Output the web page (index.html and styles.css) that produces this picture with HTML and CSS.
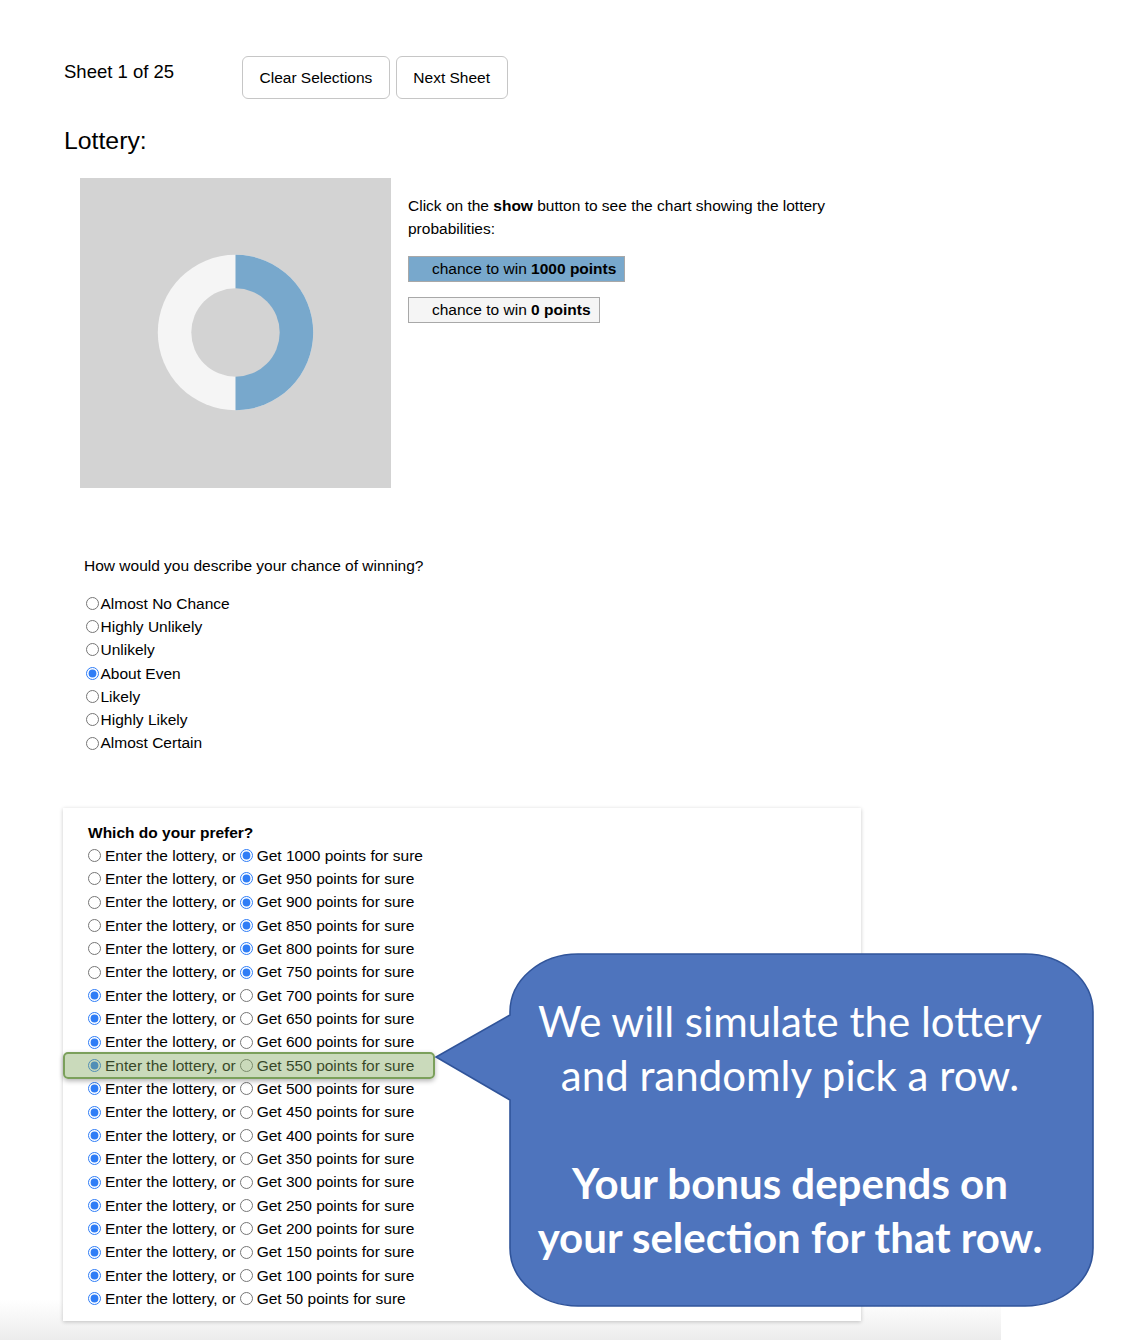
FILE: index.html
```html
<!DOCTYPE html>
<html>
<head>
<meta charset="utf-8">
<title>Lottery</title>
<link rel="stylesheet" href="styles.css">
</head>
<body>
<div class="page">
  <div class="topbar">
    <div class="sheet">Sheet 1 of 25</div>
    <button class="btn">Clear Selections</button>
    <button class="btn">Next Sheet</button>
  </div>
  <h2 class="title">Lottery:</h2>
  <div class="lottery">
    <div class="chart">
      <svg width="311" height="310" viewBox="0 0 311 310">
        <circle cx="155.5" cy="154.5" r="77.7" fill="#f5f5f5"/>
        <path d="M155.5 76.8 A77.7 77.7 0 0 1 155.5 232.2 Z" fill="#78a8cc"/>
        <circle cx="155.5" cy="154.5" r="44.2" fill="#d3d3d3"/>
      </svg>
    </div>
    <div class="info">
      <p class="info-text">Click on the <b>show</b> button to see the chart showing the lottery probabilities:</p>
      <div class="legend legend-blue">chance to win&nbsp;<b>1000 points</b></div>
      <div class="legend legend-light">chance to win&nbsp;<b>0 points</b></div>
    </div>
  </div>
  <div class="question">
    <p class="q-text">How would you describe your chance of winning?</p>
    <label class="opt"><input type="radio" name="q">Almost No Chance</label>
    <label class="opt"><input type="radio" name="q">Highly Unlikely</label>
    <label class="opt"><input type="radio" name="q">Unlikely</label>
    <label class="opt"><input type="radio" name="q" checked>About Even</label>
    <label class="opt"><input type="radio" name="q">Likely</label>
    <label class="opt"><input type="radio" name="q">Highly Likely</label>
    <label class="opt"><input type="radio" name="q">Almost Certain</label>
  </div>
  <div class="card">
    <div class="card-title">Which do your prefer?</div>
    <div class="row"><input type="radio" name="r1" class="ra">Enter the lottery, or<input type="radio" name="r1" class="rb" checked>Get 1000 points for sure</div>
    <div class="row"><input type="radio" name="r2" class="ra">Enter the lottery, or<input type="radio" name="r2" class="rb" checked>Get 950 points for sure</div>
    <div class="row"><input type="radio" name="r3" class="ra">Enter the lottery, or<input type="radio" name="r3" class="rb" checked>Get 900 points for sure</div>
    <div class="row"><input type="radio" name="r4" class="ra">Enter the lottery, or<input type="radio" name="r4" class="rb" checked>Get 850 points for sure</div>
    <div class="row"><input type="radio" name="r5" class="ra">Enter the lottery, or<input type="radio" name="r5" class="rb" checked>Get 800 points for sure</div>
    <div class="row"><input type="radio" name="r6" class="ra">Enter the lottery, or<input type="radio" name="r6" class="rb" checked>Get 750 points for sure</div>
    <div class="row"><input type="radio" name="r7" class="ra" checked>Enter the lottery, or<input type="radio" name="r7" class="rb">Get 700 points for sure</div>
    <div class="row"><input type="radio" name="r8" class="ra" checked>Enter the lottery, or<input type="radio" name="r8" class="rb">Get 650 points for sure</div>
    <div class="row"><input type="radio" name="r9" class="ra" checked>Enter the lottery, or<input type="radio" name="r9" class="rb">Get 600 points for sure</div>
    <div class="row"><input type="radio" name="r10" class="ra" checked>Enter the lottery, or<input type="radio" name="r10" class="rb">Get 550 points for sure</div>
    <div class="row"><input type="radio" name="r11" class="ra" checked>Enter the lottery, or<input type="radio" name="r11" class="rb">Get 500 points for sure</div>
    <div class="row"><input type="radio" name="r12" class="ra" checked>Enter the lottery, or<input type="radio" name="r12" class="rb">Get 450 points for sure</div>
    <div class="row"><input type="radio" name="r13" class="ra" checked>Enter the lottery, or<input type="radio" name="r13" class="rb">Get 400 points for sure</div>
    <div class="row"><input type="radio" name="r14" class="ra" checked>Enter the lottery, or<input type="radio" name="r14" class="rb">Get 350 points for sure</div>
    <div class="row"><input type="radio" name="r15" class="ra" checked>Enter the lottery, or<input type="radio" name="r15" class="rb">Get 300 points for sure</div>
    <div class="row"><input type="radio" name="r16" class="ra" checked>Enter the lottery, or<input type="radio" name="r16" class="rb">Get 250 points for sure</div>
    <div class="row"><input type="radio" name="r17" class="ra" checked>Enter the lottery, or<input type="radio" name="r17" class="rb">Get 200 points for sure</div>
    <div class="row"><input type="radio" name="r18" class="ra" checked>Enter the lottery, or<input type="radio" name="r18" class="rb">Get 150 points for sure</div>
    <div class="row"><input type="radio" name="r19" class="ra" checked>Enter the lottery, or<input type="radio" name="r19" class="rb">Get 100 points for sure</div>
    <div class="row"><input type="radio" name="r20" class="ra" checked>Enter the lottery, or<input type="radio" name="r20" class="rb">Get 50 points for sure</div>
    <div class="highlight"></div>
  </div>
  <div class="callout">
    <svg class="callout-shape" width="670" height="366" viewBox="0 0 670 366">
      <path d="M148 6 H595 A68 58 0 0 1 663 64 V300 A68 58 0 0 1 595 358 H148 A68 58 0 0 1 80 300 V152 L6 109 L80 67 V64 A68 58 0 0 1 148 6 Z" fill="#4e74bd" stroke="#30549a" stroke-width="1.6"/>
    </svg>
    <div class="callout-text">
      <div class="cl">We will simulate the lottery</div>
      <div class="cl">and randomly pick a row.</div>
      <div class="cl">&nbsp;</div>
      <div class="cl bold">Your bonus depends on</div>
      <div class="cl bold">your selection for that row.</div>
    </div>
  </div>
</div>
</body>
</html>
```

FILE: styles.css
```css
html, body {
  margin: 0;
  padding: 0;
  background: #fff;
}
body {
  font-family: "Liberation Sans", Arial, sans-serif;
  color: #000;
  font-size: 15.5px;
}
.page {
  position: relative;
  width: 1146px;
  height: 1340px;
  box-sizing: border-box;
  padding: 56px 0 0 64px;
  background: linear-gradient(to bottom, #ffffff 0px, #ffffff 1300px, #ececec 1340px) no-repeat;
  background-size: 1001px 1340px;
  overflow: hidden;
}
.topbar {
  display: flex;
  align-items: flex-start;
  height: 43px;
}
.sheet {
  width: 178px;
  margin-top: 5px;
  font-size: 18.5px;
  line-height: 21.3px;
}
.btn {
  height: 43px;
  padding: 0 16.5px;
  margin: 0 6px 0 0;
  border: 1px solid #c6c6c6;
  border-radius: 6px;
  background: #fff;
  font-family: "Liberation Sans", Arial, sans-serif;
  font-size: 15.5px;
  color: #000;
}
.title {
  margin: 28px 0 23px 0;
  font-size: 24.8px;
  line-height: 28px;
  font-weight: normal;
}
.lottery {
  display: flex;
  margin-left: 16px;
}
.chart {
  width: 311px;
  height: 310px;
  background: #d3d3d3;
}
.chart svg {
  display: block;
}
.info {
  margin-left: 17px;
  padding-top: 16px;
  width: 440px;
  display: flex;
  flex-direction: column;
  align-items: flex-start;
}
.info-text {
  margin: 0 0 15.7px 0;
  line-height: 23px;
}
.legend {
  box-sizing: border-box;
  height: 26px;
  display: flex;
  align-items: center;
  padding: 0 8px 0 23px;
  border: 1.5px solid #a8a8a8;
  margin-bottom: 15.7px;
  white-space: nowrap;
}
.legend-blue {
  background: #78a8cc;
}
.legend-light {
  background: #f5f5f5;
}
.question {
  margin: 66px 0 0 20px;
  display: flex;
  flex-direction: column;
  align-items: flex-start;
}
.q-text {
  margin: 0 0 14.2px 0;
  line-height: 23.33px;
}
.opt {
  display: flex;
  align-items: center;
  line-height: 23.33px;
}
input[type="radio"] {
  width: 13px;
  height: 13px;
  margin: 0;
  accent-color: #2f7df6;
  flex: none;
}
.opt input {
  margin: 0 2px 0 1.5px;
}
.card {
  position: relative;
  margin: 53.5px 0 0 -1px;
  width: 798px;
  box-sizing: border-box;
  padding: 12.2px 25px 11px 25px;
  background: #fff;
  box-shadow: 0 1px 4px rgba(0, 0, 0, 0.22);
}
.card-title {
  font-weight: bold;
  line-height: 23.33px;
}
.row {
  display: flex;
  align-items: center;
  line-height: 23.33px;
  white-space: nowrap;
}
.row .ra {
  margin: 0 4px 0 0;
}
.row .rb {
  margin: 0 3.5px 0 4.5px;
}
.highlight {
  position: absolute;
  left: 0;
  top: 243.4px;
  width: 372px;
  height: 27.6px;
  box-sizing: border-box;
  border: 2px solid #7ba05b;
  border-radius: 5px;
  background: rgba(128, 168, 92, 0.42);
  box-shadow: 0 2px 5px rgba(0, 0, 0, 0.3);
}
.callout {
  position: absolute;
  left: 430px;
  top: 948px;
  width: 670px;
  height: 366px;
}
.callout-shape {
  position: absolute;
  left: 0;
  top: 0;
}
.callout-text {
  position: relative;
  margin: 46px 0 0 80px;
  width: 560px;
  text-align: center;
  color: #fff;
  font-family: Lato, "Open Sans", sans-serif;
  font-size: 42px;
  line-height: 54px;
}
.cl {
  white-space: nowrap;
}
.cl.bold {
  font-weight: bold;
}
```
